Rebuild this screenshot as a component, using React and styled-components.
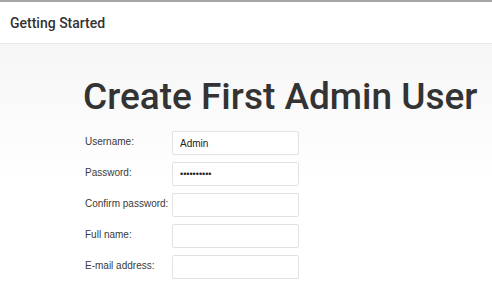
import styled, { createGlobalStyle } from 'styled-components';

const GlobalStyle = createGlobalStyle`
	html, body {
		margin: 0;
		padding: 0;
		background: #fff;
	}
	body {
		font-family: 'Liberation Sans', Arial, sans-serif;
	}
`;

const Page = styled.div`
	width: 492px;
	height: 288px;
	overflow: hidden;
	border-top: 2px solid #a6a6a6;
	box-sizing: border-box;
	display: flex;
	flex-direction: column;
`;

const Header = styled.header`
	height: 41px;
	flex-shrink: 0;
	background: #fff;
	border-bottom: 1px solid #e9e9e9;
	display: flex;
	align-items: center;
	padding-left: 10px;
	font-family: Roboto, sans-serif;
	font-weight: 500;
	font-size: 14px;
	color: #333;
`;

const Main = styled.main`
	flex: 1;
	background: linear-gradient(#f6f6f6, #fff 140px);
	padding: 31px 0 0 83px;
`;

const Title = styled.h1`
	margin: 0 0 12px;
	font-family: Roboto, sans-serif;
	font-weight: 500;
	font-size: 37px;
	line-height: 44px;
	color: #333;
`;

const Form = styled.form`
	display: flex;
	flex-direction: column;
	gap: 7px;
	padding-left: 2px;
`;

const Row = styled.div`
	display: flex;
	align-items: center;
`;

const Label = styled.label`
	width: 87px;
	flex-shrink: 0;
	white-space: nowrap;
	font-size: 10px;
	color: #3a3a3a;
	margin-top: -3px;
`;

const Input = styled.input`
	box-sizing: border-box;
	height: 24px;
	width: 127px;
	margin: 0;
	border: 1px solid #e2e2e2;
	border-radius: 2px;
	background: #fff;
	padding: 0 7px;
	font-family: 'Liberation Sans', Arial, sans-serif;
	font-size: ${(p) => (p.type === 'password' ? '9px' : '10px')};
	color: #222;
	outline: none;
`;

const fields = [
	{ id: 'username', label: 'Username:', type: 'text', value: 'Admin' },
	{ id: 'password1', label: 'Password:', type: 'password', value: 'Admin12345' },
	{ id: 'password2', label: 'Confirm password:', type: 'password', value: '' },
	{ id: 'fullname', label: 'Full name:', type: 'text', value: '' },
	{ id: 'email', label: 'E-mail address:', type: 'text', value: '' },
];

const App = () => (
	<>
		<GlobalStyle />
		<Page>
			<Header>Getting Started</Header>
			<Main>
				<Title>Create First Admin User</Title>
				<Form>
					{fields.map((f) => (
						<Row key={f.id}>
							<Label htmlFor={f.id}>{f.label}</Label>
							<Input id={f.id} type={f.type} defaultValue={f.value} />
						</Row>
					))}
				</Form>
			</Main>
		</Page>
	</>
);

export default App;
